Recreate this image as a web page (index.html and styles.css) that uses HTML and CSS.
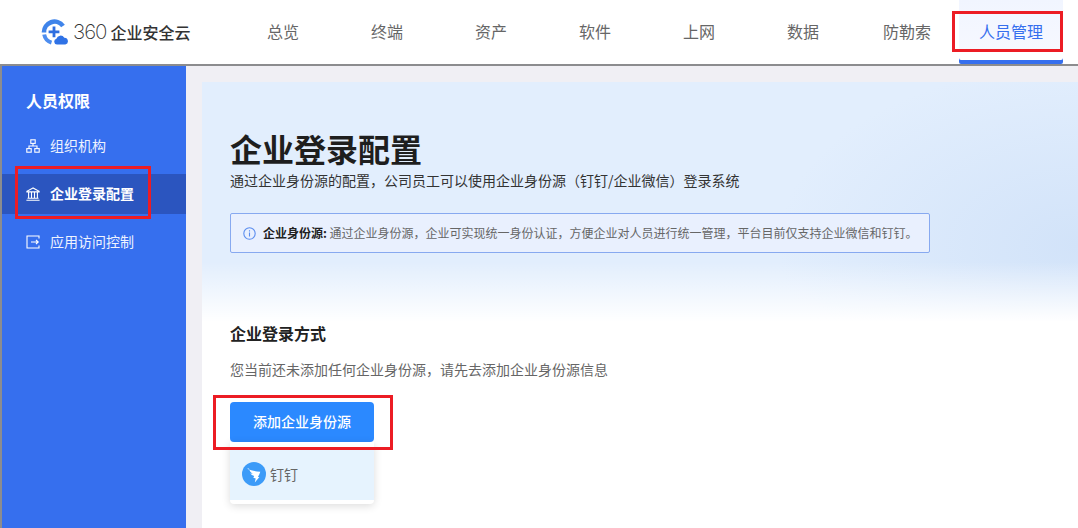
FILE: index.html
```html
<!DOCTYPE html>
<html lang="zh-CN">
<head>
<meta charset="utf-8">
<title>企业登录配置</title>
<link rel="stylesheet" href="styles.css">
</head>
<body>
<div class="app">
  <header class="topbar">
    <div class="logo">
      <svg class="logo-mark" width="27" height="26" viewBox="0 0 27 26">
        <path d="M3 13.500A10.500 10.500 0 0 1 22 7" fill="none" stroke="#3f84ea" stroke-width="4.600"/>
        <path d="M3.200 15.500A10.500 10.500 0 0 0 10.500 23.600" fill="none" stroke="#4d8def" stroke-width="4"/>
        <path d="M11.600 7.500h2.800v4h4v2.800h-4v4h-2.800v-4h-4v-2.800h4z" fill="#2f6fe0"/>
        <path d="M16 25.500a2.900 2.900 0 0 1-.6-5.700 4.300 4.300 0 0 1 7.900-1 3.400 3.400 0 0 1 1 6.700z" fill="#2f72e6"/>
      </svg>
      <span class="logo-text"><span class="logo-num">360</span>企业安全云</span>
    </div>
    <nav class="nav">
      <a class="nav-item">总览</a>
      <a class="nav-item">终端</a>
      <a class="nav-item">资产</a>
      <a class="nav-item">软件</a>
      <a class="nav-item">上网</a>
      <a class="nav-item">数据</a>
      <a class="nav-item">防勒索</a>
      <a class="nav-item is-active">人员管理<span class="mark mark-nav"></span></a>
    </nav>
  </header>
  <div class="body">
    <aside class="sidebar">
      <h2 class="side-title">人员权限</h2>
      <ul class="side-list">
        <li class="side-item">
          <svg width="14" height="14" viewBox="0 0 14 14" fill="none" stroke="#fff" stroke-width="1.100"><rect x="4.800" y=".8" width="4.400" height="3.600"/><rect x=".8" y="9.600" width="4.400" height="3.600"/><rect x="8.800" y="9.600" width="4.400" height="3.600"/><path d="M7 4.400V7M3 9.600V7h8v2.600"/></svg>
          <span>组织机构</span>
        </li>
        <li class="side-item is-active">
          <svg width="14" height="14" viewBox="0 0 14 14" fill="none" stroke="#fff" stroke-width="1.100"><path d="M7 .9 .9 4.300v.6h12.200v-.6zM2.600 5v6M5.500 5v6M8.500 5v6M11.400 5v6M1.500 11.200h11M.4 13.200h13.200"/></svg>
          <span>企业登录配置</span>
          <span class="mark mark-side"></span>
        </li>
        <li class="side-item">
          <svg width="14" height="14" viewBox="0 0 14 14" fill="none" stroke="#fff" stroke-width="1.100"><path d="M13 3.500V1H1v12h12v-2.500M5 7h7M10 5l2.200 2L10 9"/></svg>
          <span>应用访问控制</span>
        </li>
      </ul>
    </aside>
    <main class="main">
      <section class="panel">
        <div class="banner">
          <h1 class="page-title">企业登录配置</h1>
          <p class="page-desc">通过企业身份源的配置，公司员工可以使用企业身份源（钉钉/企业微信）登录系统</p>
          <div class="alert">
            <svg width="13" height="13" viewBox="0 0 13 13" fill="none" stroke="#5b8def" stroke-width="1.100"><circle cx="6.500" cy="6.500" r="5.700"/><path d="M6.500 5.600v4M6.500 3.200v1.300"/></svg>
            <p class="alert-text"><b>企业身份源:</b> 通过企业身份源，企业可实现统一身份认证，方便企业对人员进行统一管理，平台目前仅支持企业微信和钉钉。</p>
          </div>
        </div>
        <div class="login">
          <h3 class="login-title">企业登录方式</h3>
          <p class="login-desc">您当前还未添加任何企业身份源，请先去添加企业身份源信息</p>
          <div class="add-wrap">
            <button class="add-btn">添加企业身份源</button>
            <span class="mark mark-btn"></span>
            <div class="menu">
              <div class="menu-item">
                <svg width="24" height="24" viewBox="0 0 24 24"><circle cx="12" cy="12" r="12" fill="#3c9bf8"/><path d="M5 6.800c3.800 1.700 8 2.600 13.300 2.900-.6 1.900-1.400 3.700-2.400 5.300h1.500l-4.600 5.400.9-4-2.400-.6.900-1.900c-1.600-.5-3-1.300-3.900-2.500l2.500.3c-2.100-1-3.200-2.500-3.800-5.100z" fill="#fff"/></svg>
                <span>钉钉</span>
              </div>
            </div>
          </div>
        </div>
      </section>
    </main>
  </div>
</div>
</body>
</html>
```
FILE: styles.css
```css
* { box-sizing: border-box; }
html, body { margin: 0; padding: 0; }
body {
  width: 1078px;
  height: 528px;
  overflow: hidden;
  background: #fff;
  font-family: "Noto Sans CJK SC", "Noto Sans", sans-serif;
  color: #222;
}
h1, h2, h3, p, ul { margin: 0; padding: 0; }
ul { list-style: none; }
.app { display: flex; flex-direction: column; height: 528px; }

.topbar {
  display: flex;
  height: 66px;
  flex: none;
  background: #fff;
  border-bottom: 2px solid #8c8c8e;
}
.logo { display: flex; align-items: center; width: 231px; padding: 0 0 0 41px; gap: 5px; }
.logo-mark { flex: none; }
.logo-text { font-size: 16px; line-height: 26px; font-weight: 500; color: #333; white-space: nowrap; }
.logo-num { font-family: "Inter", sans-serif; font-size: 20.500px; font-weight: 200; margin-right: 4px; letter-spacing: -1px; }

.nav { display: flex; }
.nav-item {
  position: relative;
  width: 104px;
  height: 64px;
  display: flex;
  align-items: center;
  justify-content: center;
  font-size: 16px;
  padding-bottom: 2px;
  color: #666;
}
.nav-item.is-active {
  color: #366fee;
  background: linear-gradient(#f1f5ff 0, #f6f8ff 78%, #fff 80%);
  box-shadow: inset 0 -4px 0 #366fee;
  border-radius: 0 0 2px 2px;
}

.body { display: flex; flex: 1; min-height: 0; }
.sidebar {
  width: 186px;
  flex: none;
  background: #366fee;
  border-left: 2px solid #8c8c8e;
  color: #fff;
  padding-top: 22px;
}
.side-title { font-size: 16px; line-height: 24px; font-weight: 700; padding-left: 24px; margin-bottom: 14px; }
.side-list { display: flex; flex-direction: column; gap: 8px; }
.side-item {
  position: relative;
  display: flex;
  align-items: center;
  gap: 10px;
  height: 40px;
  padding-left: 24px;
  font-size: 14px;
  color: #eef3ff;
}
.side-item span:not(.mark) { position: relative; top: -1px; }
.side-item svg { flex: none; }
.side-item.is-active { background: #2b55bf; color: #fff; font-weight: 700; }

.main { flex: 1; min-width: 0; background: #f0eff4; padding: 16px 0 0 16px; }
.panel { background: #fff; height: 100%; }
.banner {
  height: 240px;
  padding: 46px 0 0 28px;
  background:
    linear-gradient(rgba(255,255,255,0) 75%, #fff 100%),
    radial-gradient(300px 180px at 100% 68%, #d2e3f9 0, rgba(210,227,249,0) 100%),
    #e2eefd;
}
.page-title { font-size: 32px; line-height: 40px; font-weight: 700; color: #1e1e1e; }
.page-desc { font-size: 14px; line-height: 22px; margin-top: 1px; color: #333; }
.alert {
  display: flex;
  align-items: center;
  gap: 7px;
  width: 700px;
  height: 40px;
  margin-top: 22px;
  padding-left: 12px;
  background: #e9f0fe;
  border: 1px solid #87a9f0;
  border-radius: 2px;
}
.alert svg { flex: none; }
.alert-text { font-size: 12px; line-height: 20px; color: #666; white-space: nowrap; }
.alert-text b { color: #222; font-weight: 700; }

.login { padding: 0 0 0 28px; }
.login-title { font-size: 16px; line-height: 24px; font-weight: 700; margin-top: -1px; color: #222; }
.login-desc { font-size: 14px; line-height: 22px; margin-top: 13px; color: #666; }
.add-wrap { position: relative; width: 144px; margin-top: 22px; }
.add-btn {
  display: block;
  width: 144px;
  height: 40px;
  border: 0;
  border-radius: 4px;
  background: #2b89ff;
  color: #fff;
  font: 500 14px/20px "Noto Sans CJK SC", sans-serif;
  padding: 0 0 2px;
}
.menu {
  width: 144px;
  height: 62px;
  padding: 6px 0 4px;
  background: #fff;
  border-radius: 0 0 4px 4px;
  box-shadow: 0 2px 8px rgba(0,0,0,.14);
}
.menu-item {
  display: flex;
  align-items: center;
  gap: 4px;
  height: 52px;
  padding-left: 12px;
  background: #e6f3fe;
  font-size: 14px;
  color: #666;
}

.mark { position: absolute; border: 3px solid #ec1c24; pointer-events: none; }
.mark-nav { left: -7px; top: 11px; width: 111px; height: 41px; }
.mark-side { left: 13px; top: -8px; width: 136px; height: 53px; }
.mark-btn { left: -17px; top: -7px; width: 180px; height: 55px; }
```
